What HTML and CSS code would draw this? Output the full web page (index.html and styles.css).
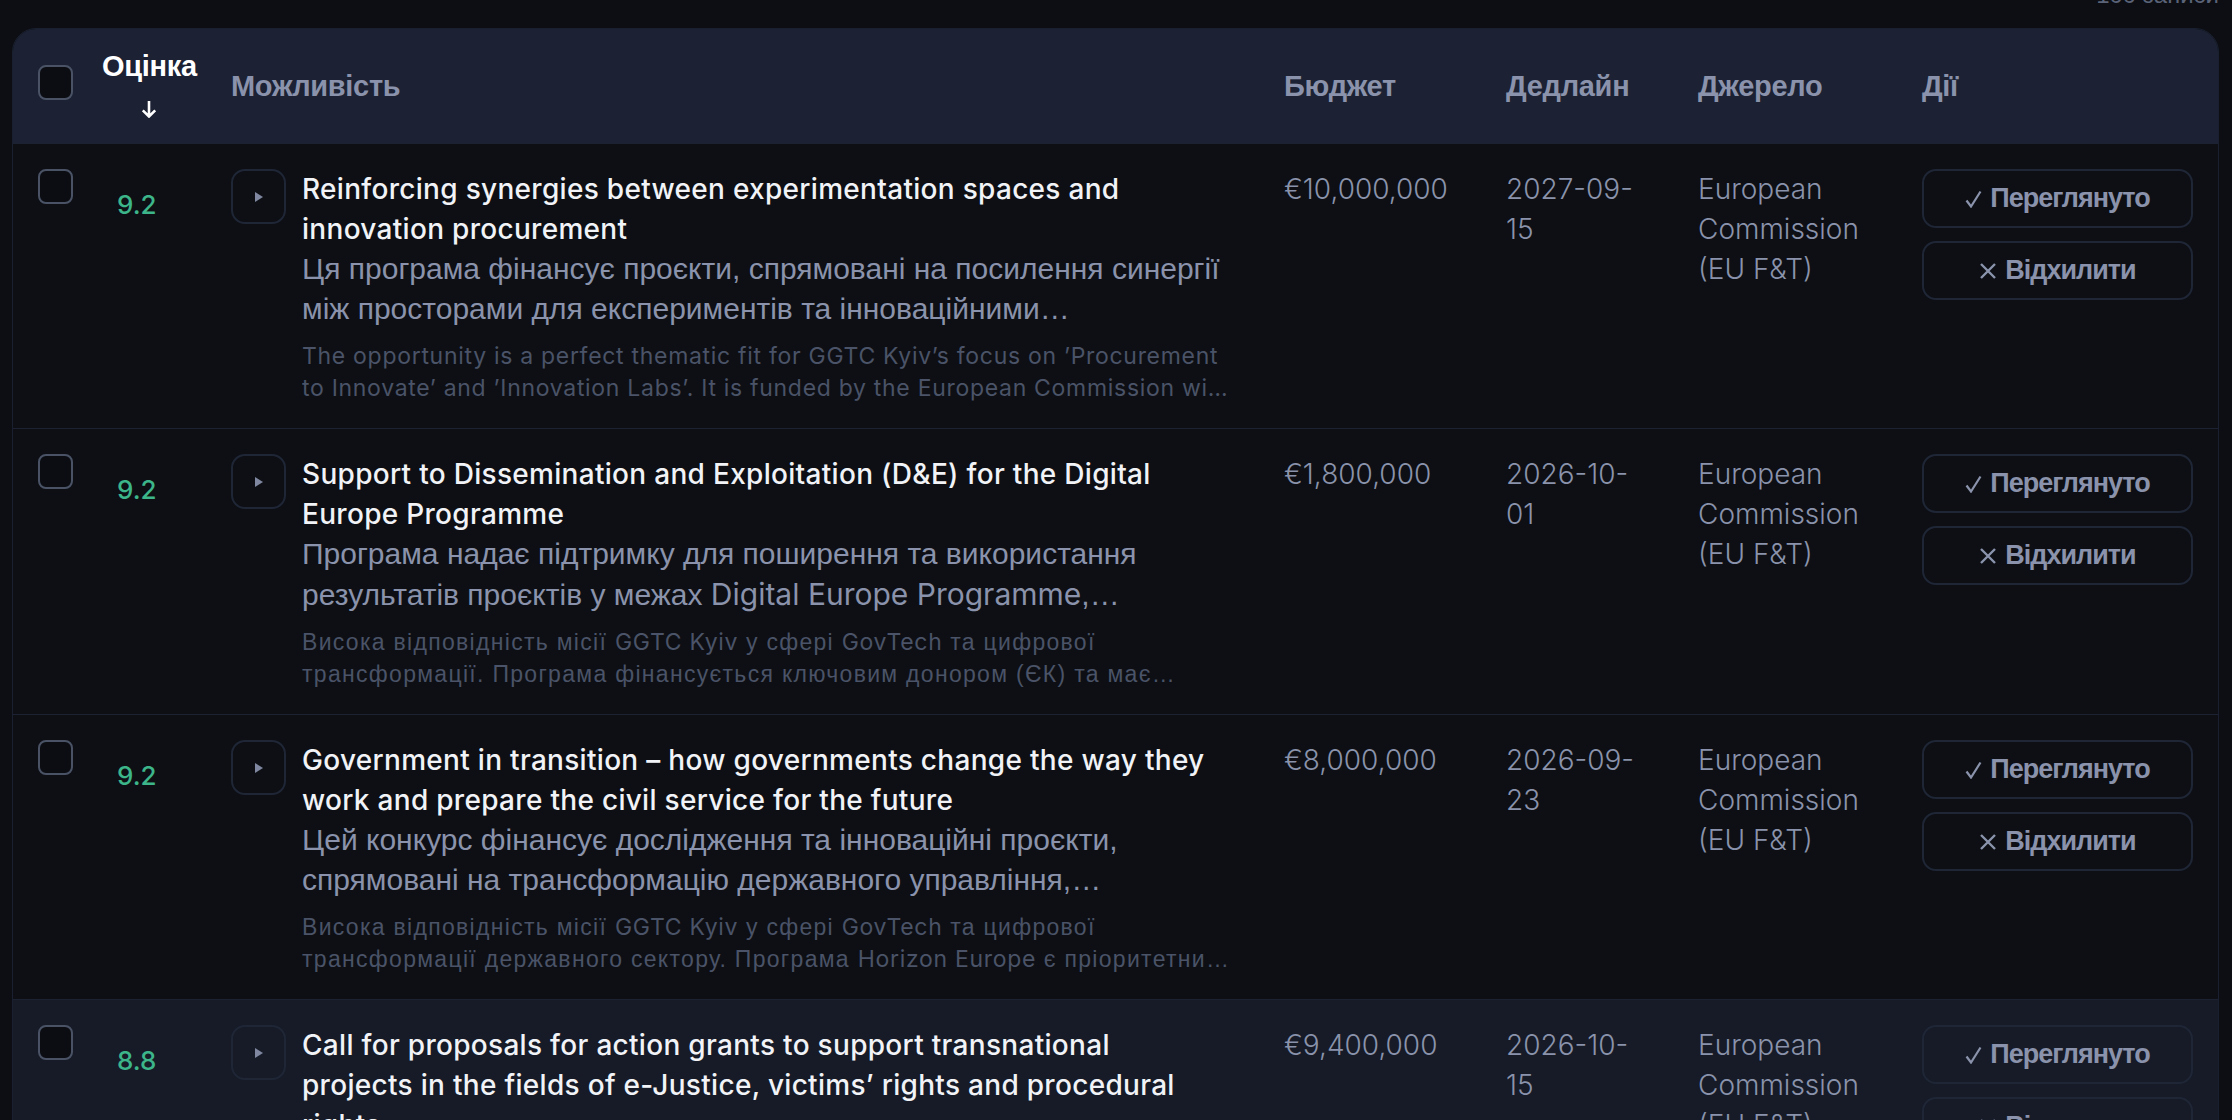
FILE: index.html
```html
<!DOCTYPE html>
<html lang="uk">
<head>
<meta charset="utf-8">
<title>Можливості</title>
<link rel="stylesheet" href="styles.css">
</head>
<body>
<div class="page">
  <div class="meta"><span>100 записи</span></div>
  <div class="table">
    <div class="row head">
      <div class="cell"><span class="check"></span></div>
      <div class="cell"><span class="sort">Оцінка<svg class="arrow" width="16" height="18" viewBox="0 0 16 18" aria-label="↓"><path d="M8 1 V16.5 M1.8 10.3 L8 16.5 L14.2 10.3" fill="none" stroke="#ffffff" stroke-width="2.6"/></svg></span></div>
      <div class="cell">Можливість</div>
      <div class="cell">Бюджет</div>
      <div class="cell">Дедлайн</div>
      <div class="cell">Джерело</div>
      <div class="cell">Дії</div>
    </div>

    <div class="row">
      <div class="cell"><span class="check"></span></div>
      <div class="cell score">9.2</div>
      <div class="cell opp">
        <button class="expand"><svg width="10" height="10" viewBox="0 0 10 10"><polygon points="1,0 9,5 1,10" fill="#7f88a0"/></svg></button>
        <div class="opp-text">
          <div class="title">Reinforcing synergies between experimentation spaces and innovation procurement</div>
          <div class="desc">Ця програма фінансує проєкти, спрямовані на посилення синергії між просторами для експериментів та інноваційними закупівельними процедурами в державному секторі.</div>
          <div class="reason lat">The opportunity is a perfect thematic fit for GGTC Kyiv’s focus on ’Procurement to Innovate’ and ’Innovation Labs’. It is funded by the European Commission with a significant budget and a long horizon.</div>
        </div>
      </div>
      <div class="cell val">€10,000,000</div>
      <div class="cell val date">2027-09-15</div>
      <div class="cell val">European Commission (EU F&amp;T)</div>
      <div class="cell actions">
        <button class="act"><svg class="ic" width="17" height="18" viewBox="0 0 17 18"><polyline points="1.5,10.5 6,16.5 15.5,1.5" fill="none" stroke="#8a93ab" stroke-width="2.2"/></svg>Переглянуто</button>
        <button class="act"><svg class="ic" width="18" height="18" viewBox="0 0 18 18"><path d="M2 2 L16 16 M16 2 L2 16" stroke="#8a93ab" stroke-width="2.4"/></svg>Відхилити</button>
      </div>
    </div>

    <div class="row">
      <div class="cell"><span class="check"></span></div>
      <div class="cell score">9.2</div>
      <div class="cell opp">
        <button class="expand"><svg width="10" height="10" viewBox="0 0 10 10"><polygon points="1,0 9,5 1,10" fill="#7f88a0"/></svg></button>
        <div class="opp-text">
          <div class="title">Support to Dissemination and Exploitation (D&amp;E) for the Digital Europe Programme</div>
          <div class="desc">Програма надає підтримку для поширення та використання результатів проєктів у межах <span class="lat">Digital Europe Programme</span>, популяризуючи впровадження цифрових рішень у публічному секторі.</div>
          <div class="reason">Висока відповідність місії <span class="lat">GGTC Kyiv</span> у сфері <span class="lat">GovTech</span> та цифрової трансформації. Програма фінансується ключовим донором (ЄК) та має достатньо великий бюджет для консорціумів.</div>
        </div>
      </div>
      <div class="cell val">€1,800,000</div>
      <div class="cell val date">2026-10-01</div>
      <div class="cell val">European Commission (EU F&amp;T)</div>
      <div class="cell actions">
        <button class="act"><svg class="ic" width="17" height="18" viewBox="0 0 17 18"><polyline points="1.5,10.5 6,16.5 15.5,1.5" fill="none" stroke="#8a93ab" stroke-width="2.2"/></svg>Переглянуто</button>
        <button class="act"><svg class="ic" width="18" height="18" viewBox="0 0 18 18"><path d="M2 2 L16 16 M16 2 L2 16" stroke="#8a93ab" stroke-width="2.4"/></svg>Відхилити</button>
      </div>
    </div>

    <div class="row">
      <div class="cell"><span class="check"></span></div>
      <div class="cell score">9.2</div>
      <div class="cell opp">
        <button class="expand"><svg width="10" height="10" viewBox="0 0 10 10"><polygon points="1,0 9,5 1,10" fill="#7f88a0"/></svg></button>
        <div class="opp-text">
          <div class="title">Government in transition – how governments change the way they work and prepare the civil service for the future</div>
          <div class="desc">Цей конкурс фінансує дослідження та інноваційні проєкти, спрямовані на трансформацію державного управління, модернізацію державної служби та підготовку кадрів.</div>
          <div class="reason">Висока відповідність місії <span class="lat">GGTC Kyiv</span> у сфері <span class="lat">GovTech</span> та цифрової трансформації державного сектору. Програма <span class="lat">Horizon Europe</span> є пріоритетним джерелом фінансування.</div>
        </div>
      </div>
      <div class="cell val">€8,000,000</div>
      <div class="cell val date">2026-09-23</div>
      <div class="cell val">European Commission (EU F&amp;T)</div>
      <div class="cell actions">
        <button class="act"><svg class="ic" width="17" height="18" viewBox="0 0 17 18"><polyline points="1.5,10.5 6,16.5 15.5,1.5" fill="none" stroke="#8a93ab" stroke-width="2.2"/></svg>Переглянуто</button>
        <button class="act"><svg class="ic" width="18" height="18" viewBox="0 0 18 18"><path d="M2 2 L16 16 M16 2 L2 16" stroke="#8a93ab" stroke-width="2.4"/></svg>Відхилити</button>
      </div>
    </div>

    <div class="row hover">
      <div class="cell"><span class="check"></span></div>
      <div class="cell score">8.8</div>
      <div class="cell opp">
        <button class="expand"><svg width="10" height="10" viewBox="0 0 10 10"><polygon points="1,0 9,5 1,10" fill="#7f88a0"/></svg></button>
        <div class="opp-text">
          <div class="title">Call for proposals for action grants to support transnational projects in the fields of e-Justice, victims’ rights and procedural rights</div>
          <div class="desc">Конкурс підтримує транснаціональні проєкти у сферах електронного правосуддя, прав жертв та процесуальних прав.</div>
          <div class="reason">Часткова відповідність напрямам <span class="lat">GGTC Kyiv</span> щодо цифровізації публічних послуг.</div>
        </div>
      </div>
      <div class="cell val">€9,400,000</div>
      <div class="cell val date">2026-10-15</div>
      <div class="cell val">European Commission (EU F&amp;T)</div>
      <div class="cell actions">
        <button class="act"><svg class="ic" width="17" height="18" viewBox="0 0 17 18"><polyline points="1.5,10.5 6,16.5 15.5,1.5" fill="none" stroke="#8a93ab" stroke-width="2.2"/></svg>Переглянуто</button>
        <button class="act"><svg class="ic" width="18" height="18" viewBox="0 0 18 18"><path d="M2 2 L16 16 M16 2 L2 16" stroke="#8a93ab" stroke-width="2.4"/></svg>Відхилити</button>
      </div>
    </div>
  </div>
</div>
</body>
</html>
```

FILE: styles.css
```css
html, body {
  margin: 0;
  background: #0c0e13;
}

body {
  font-family: "Liberation Sans", Arial, sans-serif;
  color: #8a93ab;
}

.page {
  padding: 0 13px 0 12px;
}

.meta {
  height: 28px;
  overflow: hidden;
  text-align: right;
  color: #5a6378;
  font-size: 24px;
  line-height: 24px;
}

.meta span {
  display: block;
  margin-top: -17px;
}

.table {
  border: 1px solid #1a2030;
  border-radius: 24px;
  overflow: hidden;
  background: #0d0f14;
}

.row {
  display: grid;
  grid-template-columns: 64px 129px 1053px 222px 192px 224px 1fr;
  padding: 25px 25px 24px;
  border-top: 1px solid #1c2231;
  align-items: start;
}

.row.head {
  border-top: none;
  background: #1c2233;
  padding: 0 25px;
  height: 114px;
  align-items: center;
  font-weight: bold;
  font-size: 29px;
  letter-spacing: -0.3px;
  color: #8a93ab;
}

.row.hover {
  background: #161b27;
}

.sort {
  display: inline-flex;
  flex-direction: column;
  align-items: center;
  color: #ffffff;
  line-height: 40px;
}

.arrow {
  display: block;
  margin: 14px 0 9px;
}

.check {
  display: block;
  width: 31px;
  height: 31px;
  border: 2px solid #4a5366;
  border-radius: 8px;
  background: #0b0d12;
}

.head .check {
  margin-bottom: 7px;
}

.score {
  font-family: Inter, sans-serif;
  font-weight: 500;
  font-size: 26px;
  line-height: 40px;
  color: #3db58a;
  padding: 16px 0 0 15px;
}

.opp {
  display: flex;
  gap: 16px;
  padding-right: 52px;
}

.expand {
  flex: none;
  width: 55px;
  height: 55px;
  border: 2px solid #1f2636;
  border-radius: 14px;
  background: transparent;
  display: flex;
  align-items: center;
  justify-content: center;
  padding: 0;
}

.opp-text {
  flex: 1;
  min-width: 0;
}

.title {
  font-family: Inter, sans-serif;
  font-weight: 500;
  font-size: 28px;
  letter-spacing: 0.3px;
  line-height: 40px;
  color: #f1f3f7;
  padding-right: 12px;
}

.desc {
  font-size: 30px;
  line-height: 40px;
  color: #8a93ab;
  display: -webkit-box;
  -webkit-line-clamp: 2;
  -webkit-box-orient: vertical;
  overflow: hidden;
}

.reason {
  margin-top: 11px;
  font-size: 23px;
  letter-spacing: 1.3px;
  line-height: 32px;
  color: #4a5367;
  display: -webkit-box;
  -webkit-line-clamp: 2;
  -webkit-box-orient: vertical;
  overflow: hidden;
}

.lat {
  font-family: Inter, sans-serif;
}

.reason .lat,
.reason.lat {
  letter-spacing: 0.7px;
}

.val {
  font-family: Inter, sans-serif;
  font-weight: 300;
  font-size: 28px;
  line-height: 40px;
  color: #8a93ab;
  padding-right: 25px;
}

.val.date {
  padding-right: 50px;
}

.actions {
  display: flex;
  flex-direction: column;
  gap: 13px;
}

.act {
  height: 59px;
  border: 2px solid #1f2636;
  border-radius: 14px;
  background: transparent;
  color: #8a93ab;
  font-family: "Liberation Sans", Arial, sans-serif;
  font-weight: bold;
  font-size: 27px;
  letter-spacing: -1px;
  padding: 0;
  display: flex;
  align-items: center;
  justify-content: center;
  gap: 8px;
}

.ic {
  flex: none;
}
```
